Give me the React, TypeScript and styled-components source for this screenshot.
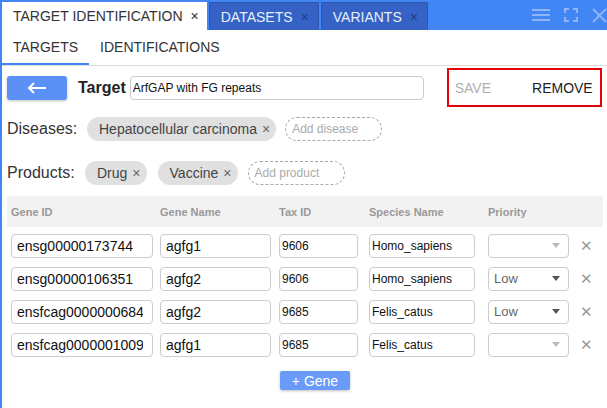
import React from "react";
import styled, { createGlobalStyle } from "styled-components";

const Global = createGlobalStyle`
  html, body { margin: 0; padding: 0; background: #fff; }
  body { font-family: "Liberation Sans", Arial, sans-serif; }
  * { box-sizing: border-box; }
`;

const Window = styled.div`
  width: 607px;
  height: 408px;
  border-left: 2px solid #4285f4;
  display: flex;
  flex-direction: column;
  overflow: hidden;
  background: #fff;
`;

const TabBar = styled.div`
  height: 30px;
  background: #4285f4;
  padding-top: 2px;
  display: flex;
  align-items: stretch;
`;

const Tab = styled.div<{ $active?: boolean }>`
  display: flex;
  align-items: center;
  gap: 8px;
  padding: 0 ${(p) => (p.$active ? 8 : 9)}px 0 11px;
  margin-right: 2px;
  font-size: 14px;
  background: ${(p) => (p.$active ? "#fff" : "#3562c4")};
  color: ${(p) => (p.$active ? "#333" : "#e8eefc")};
  border: ${(p) => (p.$active ? "none" : "1px solid #2c56b0")};
  border-bottom: none;
  span.x {
    font-size: 14px;
    color: ${(p) => (p.$active ? "#333" : "#1f3f86")};
  }
`;

const TabSpacer = styled.div`
  flex: 1;
`;

const BarIcons = styled.div`
  display: flex;
  align-items: center;
  gap: 14px;
  padding-right: 0;
  margin-top: -2px;
`;

const SubTabs = styled.div`
  height: 36px;
  display: flex;
  border-bottom: 1px solid #ddd;
`;

const SubTab = styled.div<{ $active?: boolean }>`
  padding: 0 11px;
  display: flex;
  align-items: center;
  font-size: 14px;
  color: #333;
  border-bottom: 2px solid ${(p) => (p.$active ? "#4285f4" : "transparent")};
  min-width: ${(p) => (p.$active ? "86px" : "auto")};
`;

const Content = styled.div`
  padding: 1px 4px 0 5px;
  display: flex;
  flex-direction: column;
`;

const TopRow = styled.div`
  display: flex;
  align-items: center;
  height: 39px;
  margin-top: 1px;
`;

const BackButton = styled.button`
  width: 60px;
  height: 24px;
  border: none;
  border-radius: 3px;
  background: #5b90f5;
  box-shadow: 0 1px 3px rgba(0, 0, 0, 0.25);
  display: flex;
  align-items: center;
  justify-content: center;
  padding: 0;
`;

const TargetLabel = styled.div`
  font-weight: bold;
  font-size: 16px;
  color: #222;
  margin-left: 11px;
  margin-right: 4px;
`;

const TargetInput = styled.div`
  width: 294px;
  height: 24px;
  border: 1px solid #ccc;
  border-radius: 4px;
  display: flex;
  align-items: center;
  padding-left: 2px;
  font-size: 12px;
  color: #111;
`;

const ActionBox = styled.div`
  margin-left: 23px;
  width: 155px;
  height: 39px;
  border: 2px solid #e8000b;
  display: flex;
  align-items: center;
  justify-content: space-between;
  padding: 0 7px 0 6px;
  font-size: 14px;
`;

const Action = styled.span<{ $disabled?: boolean }>`
  color: ${(p) => (p.$disabled ? "#b0b0b0" : "#222")};
`;

const TagRow = styled.div`
  display: flex;
  align-items: center;
  height: 44px;
`;

const TagLabel = styled.div<{ $w: number }>`
  font-size: 16px;
  color: #333;
  width: ${(p) => p.$w}px;
`;

const Chip = styled.div<{ $gap: number }>`
  height: 24px;
  border-radius: 12px;
  background: #e0e0e0;
  display: flex;
  align-items: center;
  padding: 0 6px 0 12px;
  gap: 5px;
  font-size: 14px;
  color: #444;
  margin-right: ${(p) => p.$gap}px;
  span.x {
    color: #666;
    font-size: 14px;
  }
`;

const AddChip = styled.div<{ $w: number }>`
  height: 24px;
  width: ${(p) => p.$w}px;
  border-radius: 12px;
  border: 1px dashed #aaa;
  display: flex;
  align-items: center;
  padding-left: 6px;
  font-size: 12px;
  color: #aaa;
`;

const Table = styled.div`
  margin-top: 1px;
  width: 596px;
`;

const GridRow = styled.div`
  display: grid;
  grid-template-columns: 149px 119px 90px 119px 92px 20px;
  align-items: center;
  padding-left: 4px;
`;

const HeaderRow = styled(GridRow)`
  height: 31px;
  background: #f2f2f2;
  font-size: 11px;
  font-weight: bold;
  color: #999;
  padding-top: 1px;
`;

const Body = styled.div`
  padding-top: 2px;
`;

const BodyRow = styled(GridRow)`
  height: 33px;
`;

const Cell = styled.div<{ $w: number; $pad: number; $size: number }>`
  width: ${(p) => p.$w}px;
  height: 24px;
  border: 1px solid #ccc;
  border-radius: 4px;
  display: flex;
  align-items: center;
  padding: 0 ${(p) => (p.$pad > 3 ? 9 : 2)}px 0 ${(p) => p.$pad}px;
  font-size: ${(p) => p.$size}px;
  color: #111;
  overflow: hidden;
`;

const CellText = styled.span`
  overflow: hidden;
  white-space: nowrap;
  flex: 1;
  min-width: 0;
`;

const Select = styled.div`
  width: 81px;
  height: 24px;
  border: 1px solid #ccc;
  border-radius: 4px;
  display: flex;
  align-items: center;
  justify-content: space-between;
  padding: 0 8px 0 5px;
  font-size: 13px;
  color: #666;
`;

const Arrow = styled.div<{ $light?: boolean }>`
  width: 0;
  height: 0;
  border-left: 4px solid transparent;
  border-right: 4px solid transparent;
  border-top: 5px solid ${(p) => (p.$light ? "#bbb" : "#555")};
`;

const RemoveX = styled.div`
  font-size: 15px;
  color: #999;
  text-align: left;
`;

const GeneButtonRow = styled.div`
  display: flex;
  justify-content: center;
  padding-top: 10px;
  padding-left: 20px;
`;

const GeneButton = styled.button`
  height: 19px;
  width: 70px;
  border: none;
  border-radius: 2px;
  background: #6b9bf8;
  color: #fff;
  font-family: "Liberation Sans", Arial, sans-serif;
  font-size: 14px;
  box-shadow: 0 1px 3px rgba(0, 0, 0, 0.25);
  padding: 0;
`;

const rows = [
  { id: "ensg00000173744", name: "agfg1", tax: "9606", sp: "Homo_sapiens", pr: "" },
  { id: "ensg00000106351", name: "agfg2", tax: "9606", sp: "Homo_sapiens", pr: "Low" },
  { id: "ensfcag0000000684", name: "agfg2", tax: "9685", sp: "Felis_catus", pr: "Low" },
  { id: "ensfcag0000001009", name: "agfg1", tax: "9685", sp: "Felis_catus", pr: "" },
];

export default function App() {
  return (
    <>
      <Global />
      <Window>
        <TabBar>
          <Tab $active>
            TARGET IDENTIFICATION <span className="x">×</span>
          </Tab>
          <Tab>
            DATASETS <span className="x">×</span>
          </Tab>
          <Tab>
            VARIANTS <span className="x">×</span>
          </Tab>
          <TabSpacer />
          <BarIcons>
            <svg width="18" height="14" viewBox="0 0 18 14">
              <g stroke="#8fb4f9" strokeWidth="2">
                <line x1="0" y1="2" x2="18" y2="2" />
                <line x1="0" y1="7" x2="18" y2="7" />
                <line x1="0" y1="12" x2="18" y2="12" />
              </g>
            </svg>
            <svg width="14" height="14" viewBox="0 0 14 14" fill="none">
              <g stroke="#8fb4f9" strokeWidth="2">
                <path d="M1 5V1h4M9 1h4v4M13 9v4h-4M5 13H1V9" />
              </g>
            </svg>
            <svg width="15" height="15" viewBox="0 0 15 15">
              <g stroke="#8fb4f9" strokeWidth="2">
                <line x1="1" y1="1" x2="14" y2="14" />
                <line x1="14" y1="1" x2="1" y2="14" />
              </g>
            </svg>
          </BarIcons>
        </TabBar>
        <SubTabs>
          <SubTab $active>TARGETS</SubTab>
          <SubTab>IDENTIFICATIONS</SubTab>
        </SubTabs>
        <Content>
          <TopRow>
            <BackButton>
              <svg width="20" height="12" viewBox="0 0 20 12" fill="none">
                <path d="M19 6H2M7 1L2 6l5 5" stroke="#fff" strokeWidth="2" />
              </svg>
            </BackButton>
            <TargetLabel>Target</TargetLabel>
            <TargetInput>ArfGAP with FG repeats</TargetInput>
            <ActionBox>
              <Action $disabled>SAVE</Action>
              <Action>REMOVE</Action>
            </ActionBox>
          </TopRow>
          <TagRow>
            <TagLabel $w={80}>Diseases:</TagLabel>
            <Chip $gap={9}>
              Hepatocellular carcinoma <span className="x">×</span>
            </Chip>
            <AddChip $w={97}>Add disease</AddChip>
          </TagRow>
          <TagRow>
            <TagLabel $w={78}>Products:</TagLabel>
            <Chip $gap={11}>
              Drug <span className="x">×</span>
            </Chip>
            <Chip $gap={10}>
              Vaccine <span className="x">×</span>
            </Chip>
            <AddChip $w={97}>Add product</AddChip>
          </TagRow>
          <Table>
            <HeaderRow>
              <div>Gene ID</div>
              <div>Gene Name</div>
              <div>Tax ID</div>
              <div>Species Name</div>
              <div>Priority</div>
              <div />
            </HeaderRow>
            <Body>
              {rows.map((r, i) => (
                <BodyRow key={i}>
                  <Cell $w={142} $pad={5} $size={14}>
                    <CellText>{r.id}</CellText>
                  </Cell>
                  <Cell $w={111} $pad={5} $size={14}>
                    <CellText>{r.name}</CellText>
                  </Cell>
                  <Cell $w={79} $pad={2} $size={12}>
                    <CellText>{r.tax}</CellText>
                  </Cell>
                  <Cell $w={106} $pad={2} $size={12}>
                    <CellText>{r.sp}</CellText>
                  </Cell>
                  <Select>
                    <span>{r.pr}</span>
                    <Arrow $light={!r.pr} />
                  </Select>
                  <RemoveX>✕</RemoveX>
                </BodyRow>
              ))}
            </Body>
          </Table>
          <GeneButtonRow>
            <GeneButton>+ Gene</GeneButton>
          </GeneButtonRow>
        </Content>
      </Window>
    </>
  );
}
